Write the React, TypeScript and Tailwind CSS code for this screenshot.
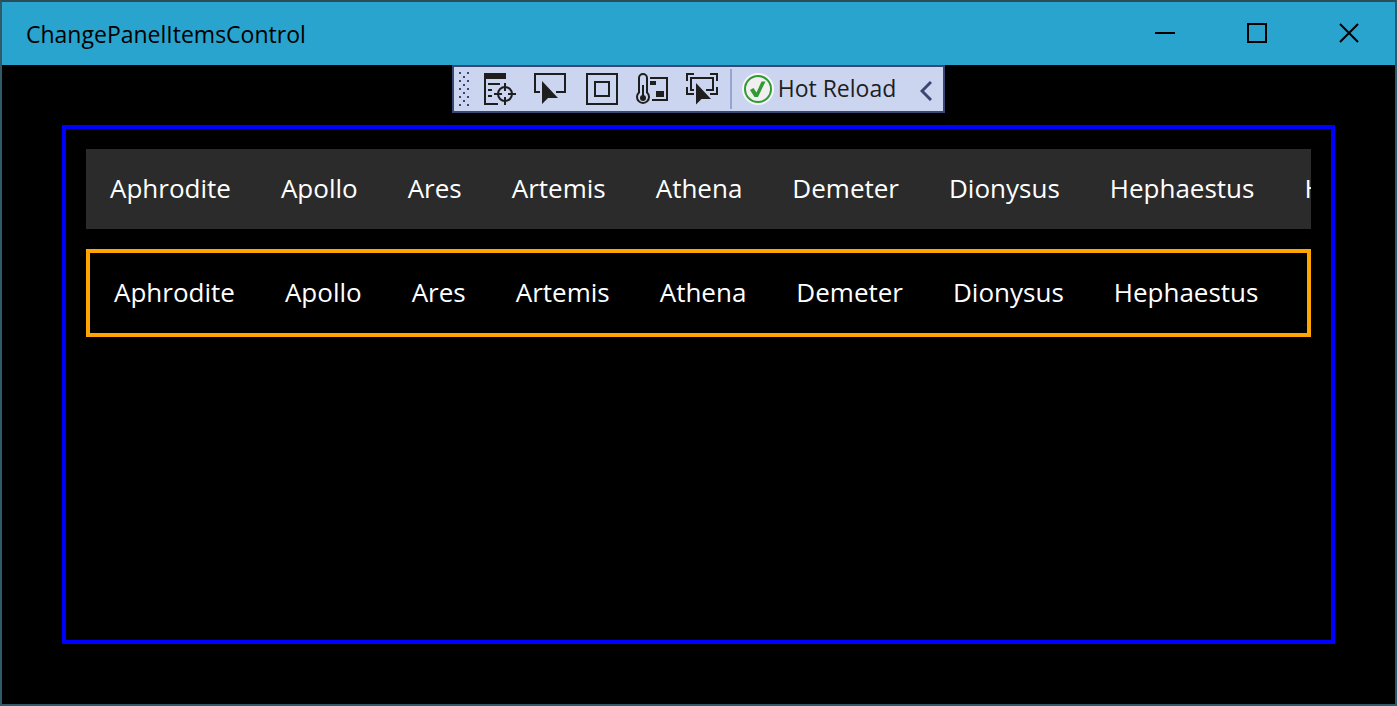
import type { ReactNode } from "react";

const gods = [
  "Aphrodite",
  "Apollo",
  "Ares",
  "Artemis",
  "Athena",
  "Demeter",
  "Dionysus",
  "Hephaestus",
  "Hera",
];

function Glyph({ children }: { children: ReactNode }) {
  return (
    <svg width="32" height="32" viewBox="0 0 32 32" fill="none" stroke="#1e1e1e" strokeWidth="2" aria-hidden="true">
      {children}
    </svg>
  );
}

type Tool = { label: string; icon: ReactNode };

const selectionTools: Tool[] = [
  {
    label: "Go to Live Visual Tree",
    icon: (
      <Glyph>
        <path d="M0 0h22v6H0z" fill="#1e1e1e" stroke="none" />
        <path d="M1 5v26h13M4 11h12M4 17h4M4 23h4" />
        <circle cx="21" cy="21" r="7" />
        <path d="M21 10v8M21 24v8M10 21h8M24 21h8" />
      </Glyph>
    ),
  },
  {
    label: "Select Element",
    icon: (
      <Glyph>
        <path d="M6 19H1V1h30v18h-9" />
        <path d="M8 8v23l6-6h10z" fill="#1e1e1e" stroke="none" />
      </Glyph>
    ),
  },
];

const displayTools: Tool[] = [
  {
    label: "Display Layout Adorners",
    icon: (
      <Glyph>
        <path d="M1 1h30v30H1zM9 9h14v14H9z" />
      </Glyph>
    ),
  },
  {
    label: "Track Focused Element",
    icon: (
      <Glyph>
        <path d="M3 19.5V5a4 4 0 0 1 8 0v14.5a6 6 0 1 1-8 0zM7 12v11" />
        <circle cx="7" cy="25" r="3" fill="#1e1e1e" stroke="none" />
        <path d="M14 5h17v22H16" />
        <path d="M14 8h6v4h-6zM20 18h8v6h-8z" fill="#1e1e1e" stroke="none" />
      </Glyph>
    ),
  },
  {
    label: "Show in XAML Live Preview",
    icon: (
      <Glyph>
        <path d="M1 8V1h7M24 1h7v7M1 14v7h7M31 14v7h-7" />
        <path d="M8 17H5V5h22v12h-7" />
        <path d="M10 10v21.500l5.500-5.500h9.500z" fill="#1e1e1e" stroke="none" />
      </Glyph>
    ),
  },
];

function ToolGroup({ tools }: { tools: Tool[] }) {
  return (
    <div className="flex gap-[18px]">
      {tools.map((tool) => (
        <button key={tool.label} type="button" aria-label={tool.label}>
          {tool.icon}
        </button>
      ))}
    </div>
  );
}

function Grip() {
  const dots: ReactNode[] = [];
  for (let row = 0; row < 9; row++) {
    const xs = row % 2 === 0 ? [0, 8] : [4];
    xs.forEach((x) => dots.push(<rect key={`${x}-${row}`} x={x} y={row * 4} width="2" height="2" />));
  }
  return (
    <svg width="10" height="34" viewBox="0 0 10 34" fill="#3b4673" aria-hidden="true">
      {dots}
    </svg>
  );
}

function DebugToolbar() {
  return (
    <div
      role="toolbar"
      aria-label="In-app debugging"
      className="mx-auto flex h-12 w-fit items-center border-2 border-[#3b4673] bg-[#ccd5f0] pl-[5px] pr-[11px]"
    >
      <Grip />
      <div className="ml-[15px] flex gap-5">
        <ToolGroup tools={selectionTools} />
        <ToolGroup tools={displayTools} />
      </div>
      <div className="ml-3 h-10 w-0.5 bg-[#96a5d0]" />
      <button type="button" className="ml-2.5 flex items-center gap-1 text-[23px] leading-8 text-[#1e1e1e]">
        <svg width="32" height="32" viewBox="0 0 32 32" aria-hidden="true">
          <circle cx="16" cy="16" r="16" fill="#f4f6fa" />
          <circle cx="16" cy="16" r="13" fill="#f0f0f0" stroke="#339933" strokeWidth="2" />
          <path d="M8 17l3.500-2 3 4.500L19.500 8.500h4L16 24h-3.500z" fill="#339933" />
        </svg>
        <span className="pb-0.5">Hot Reload</span>
      </button>
      <button type="button" aria-label="Collapse toolbar" className="ml-6 mt-1">
        <svg width="12" height="20" viewBox="0 0 12 20" fill="none" stroke="#3b4673" strokeWidth="3" aria-hidden="true">
          <path d="M11 1L2 10l9 9" />
        </svg>
      </button>
    </div>
  );
}

function TitleBar() {
  const captionButton = "flex w-[92px] items-center justify-center hover:bg-white/20";
  return (
    <header className="flex h-[63px] items-stretch bg-[#29a4ce] pb-px pl-6 text-black">
      <h1 className="flex flex-1 items-center pt-0.5 text-[23px] leading-8">ChangePanelItemsControl</h1>
      <button type="button" aria-label="Minimize" className={captionButton}>
        <svg width="20" height="20" viewBox="0 0 20 20" stroke="#000" strokeWidth="2">
          <path d="M0 10h20" />
        </svg>
      </button>
      <button type="button" aria-label="Maximize" className={captionButton}>
        <svg width="20" height="20" viewBox="0 0 20 20" fill="none" stroke="#000" strokeWidth="2">
          <path d="M1 1h18v18H1z" />
        </svg>
      </button>
      <button type="button" aria-label="Close" className={captionButton}>
        <svg width="20" height="20" viewBox="0 0 20 20" fill="none" stroke="#000" strokeWidth="2">
          <path d="M1 1l18 18M19 1L1 19" />
        </svg>
      </button>
    </header>
  );
}

function ItemRow({ items }: { items: string[] }) {
  return (
    <ul className="flex h-20 items-center gap-[50px] overflow-hidden whitespace-nowrap px-6 pb-0.5 text-[26px] leading-9 text-white">
      {items.map((item) => (
        <li key={item} className="shrink-0">
          {item}
        </li>
      ))}
    </ul>
  );
}

export default function App() {
  return (
    <div className="flex min-h-screen flex-col border-2 border-[#2f5b68] border-t-[#2b4d5a] bg-black font-['Open_Sans','Noto_Sans',sans-serif]">
      <TitleBar />
      <DebugToolbar />
      <main className="mx-[60px] mb-[60px] mt-3 flex min-w-0 flex-1 flex-col gap-5 border-4 border-[#0000ff] p-5">
        <div className="overflow-hidden bg-[#2b2b2b]">
          <ItemRow items={gods} />
        </div>
        <div className="overflow-hidden border-4 border-[#ffa500]">
          <ItemRow items={gods.slice(0, 8)} />
        </div>
      </main>
    </div>
  );
}
